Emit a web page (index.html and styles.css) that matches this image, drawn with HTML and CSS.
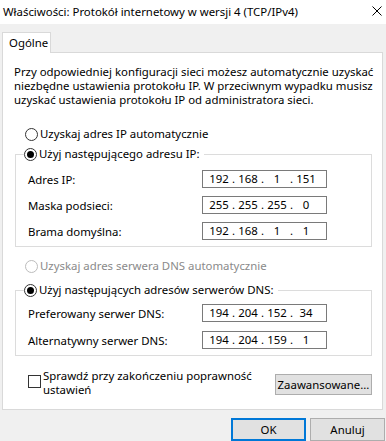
FILE: index.html
```html
<!DOCTYPE html>
<html lang="pl">
<head>
    <meta charset="UTF-8">
    <title>Właściwości: Protokół internetowy w wersji 4 (TCP/IPv4)</title>
    <link rel="stylesheet" href="styles.css">
</head>
<body>
    <div class="titlebar">
        <span class="title">Właściwości: Protokół internetowy w wersji 4 (TCP/IPv4)</span>
        <svg class="close" width="10" height="10" viewBox="0 0 10 10">
            <path d="M0.5 0.5 L9.5 9.5 M9.5 0.5 L0.5 9.5" stroke="#000" stroke-width="1" fill="none"/>
        </svg>
    </div>

    <div class="tabs">
        <div class="tab">Ogólne</div>
    </div>

    <div class="panel">
        <p class="intro">Przy odpowiedniej konfiguracji sieci możesz automatycznie uzyskać<br>
            niezbędne ustawienia protokołu IP. W przeciwnym wypadku musisz<br>
            uzyskać ustawienia protokołu IP od administratora sieci.</p>

        <div class="radio-row first">
            <span class="radio"></span>
            <span>Uzyskaj adres IP automatycznie</span>
        </div>

        <fieldset class="group ip-group">
            <legend class="radio-row">
                <span class="radio checked"></span>
                <span>Użyj następującego adresu IP:</span>
            </legend>
            <div class="field">
                <span class="label">Adres IP:</span>
                <div class="ip-box">
                    <span class="seg">192</span><span class="dot">.</span><span class="seg">168</span><span class="dot">.</span><span class="seg">1</span><span class="dot">.</span><span class="seg">151</span>
                </div>
            </div>
            <div class="field">
                <span class="label">Maska podsieci:</span>
                <div class="ip-box">
                    <span class="seg">255</span><span class="dot">.</span><span class="seg">255</span><span class="dot">.</span><span class="seg">255</span><span class="dot">.</span><span class="seg">0</span>
                </div>
            </div>
            <div class="field">
                <span class="label">Brama domyślna:</span>
                <div class="ip-box">
                    <span class="seg">192</span><span class="dot">.</span><span class="seg">168</span><span class="dot">.</span><span class="seg">1</span><span class="dot">.</span><span class="seg">1</span>
                </div>
            </div>
        </fieldset>

        <div class="radio-row disabled dns-auto">
            <span class="radio"></span>
            <span>Uzyskaj adres serwera DNS automatycznie</span>
        </div>

        <fieldset class="group dns-group">
            <legend class="radio-row">
                <span class="radio checked"></span>
                <span>Użyj następujących adresów serwerów DNS:</span>
            </legend>
            <div class="field">
                <span class="label">Preferowany serwer DNS:</span>
                <div class="ip-box">
                    <span class="seg">194</span><span class="dot">.</span><span class="seg">204</span><span class="dot">.</span><span class="seg">152</span><span class="dot">.</span><span class="seg">34</span>
                </div>
            </div>
            <div class="field">
                <span class="label">Alternatywny serwer DNS:</span>
                <div class="ip-box">
                    <span class="seg">194</span><span class="dot">.</span><span class="seg">204</span><span class="dot">.</span><span class="seg">159</span><span class="dot">.</span><span class="seg">1</span>
                </div>
            </div>
        </fieldset>

        <div class="bottom-row">
            <label class="check">
                <span class="checkbox"></span>
                <span>Sprawdź przy zakończeniu poprawność<br>ustawień</span>
            </label>
            <button class="btn advanced">Zaawansowane...</button>
        </div>
    </div>

    <div class="dialog-buttons">
        <button class="btn ok">OK</button>
        <button class="btn">Anuluj</button>
    </div>
</body>
</html>
```

FILE: styles.css
```css
body {
    margin: 0;
    width: 386px;
    height: 441px;
    overflow: hidden;
    background-color: #f0f0f0;
    font-family: "Noto Sans", Arial, sans-serif;
    font-size: 11.4px;
    color: #000;
}
.titlebar {
    height: 24px;
    background-color: #fff;
    display: flex;
    align-items: center;
    justify-content: space-between;
    padding: 0 4px 0 3px;
}
.title {
    margin-top: -2px;
    white-space: nowrap;
}
.close {
    margin-top: -2px;
}
.tabs {
    display: flex;
    padding: 8px 0 0 2px;
}
.tab {
    position: relative;
    z-index: 1;
    width: 49px;
    height: 21px;
    margin-bottom: -1px;
    background-color: #fff;
    border: 1px solid #d9d9d9;
    border-bottom: none;
    box-sizing: border-box;
    padding: 3px 0 0 6px;
    line-height: 14px;
}
.panel {
    margin: 0 3px 0 2px;
    height: 358px;
    box-sizing: border-box;
    background-color: #fff;
    border: 1px solid #d9d9d9;
    padding: 12px 10px 0 11px;
    white-space: nowrap;
}
.intro {
    margin: 0;
    line-height: 14px;
}
.radio-row {
    display: flex;
    align-items: center;
    gap: 2px;
    height: 16px;
    line-height: 16px;
}
.radio-row.first {
    margin: 19px 0 0 11px;
}
.radio {
    width: 13px;
    height: 13px;
    box-sizing: border-box;
    border: 1px solid #333;
    border-radius: 50%;
    background-color: #fff;
    display: flex;
    align-items: center;
    justify-content: center;
}
.radio.checked::after {
    content: "";
    width: 7px;
    height: 7px;
    border-radius: 50%;
    background-color: #000;
}
.disabled {
    color: #8a8a8a;
}
.disabled .radio {
    border-color: #bcbcbc;
}
.group {
    margin: 4px 0 0 1px;
    border: 1px solid #dcdcdc;
    padding: 8px 0 6px 12px;
    min-width: 0;
}
.group legend {
    padding: 0 4px 0 0;
    margin-left: -4px;
}
.field {
    display: flex;
    align-items: center;
    height: 18px;
}
.field + .field {
    margin-top: 8px;
}
.label {
    width: 174px;
}
.ip-box {
    display: flex;
    width: 125px;
    height: 18px;
    box-sizing: border-box;
    border: 1px solid #7a7a7a;
    padding-left: 3px;
    line-height: 16px;
}
.seg {
    width: 26px;
    text-align: center;
}
.dot {
    width: 3px;
    text-align: center;
}
.dns-auto {
    margin: 11px 0 0 11px;
}
.dns-group {
    margin-top: 8px;
    padding-top: 6px;
}
.dns-group .field + .field {
    margin-top: 9px;
}
.bottom-row {
    display: flex;
    justify-content: space-between;
    align-items: flex-start;
    margin-top: 13px;
    padding-left: 14px;
}
.check {
    display: flex;
    align-items: flex-start;
    gap: 2px;
    line-height: 14px;
}
.checkbox {
    width: 13px;
    height: 13px;
    margin-top: 6px;
    box-sizing: border-box;
    border: 1px solid #333;
    background-color: #fff;
}
.btn {
    font-family: inherit;
    font-size: 11.4px;
    color: #000;
    background-color: #e1e1e1;
    border: 1px solid #adadad;
    padding: 0;
    height: 21px;
}
.advanced {
    width: 97px;
    margin-top: 5px;
}
.dialog-buttons {
    display: flex;
    justify-content: flex-end;
    gap: 4px;
    padding: 8px 1px 0 0;
}
.dialog-buttons .btn {
    width: 75px;
    height: 23px;
}
.btn.ok {
    border: 2px solid #0078d7;
}
```
